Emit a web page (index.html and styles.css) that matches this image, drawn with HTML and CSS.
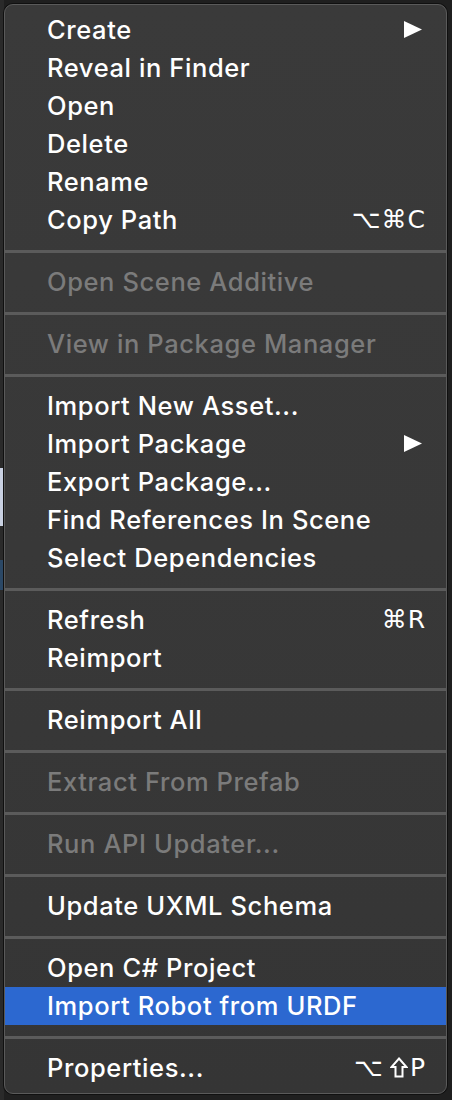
FILE: index.html
```html
<!DOCTYPE html>
<html>
<head>
<meta charset="utf-8">
<link rel="stylesheet" href="styles.css">
</head>
<body>
<div class="menu">
  <div class="item"><span class="label">Create</span><svg class="arrow" width="18" height="17" viewBox="0 0 18 17"><polygon points="0,0 18,8.5 0,17" fill="#ffffff"/></svg></div>
  <div class="item"><span class="label">Reveal in Finder</span></div>
  <div class="item"><span class="label">Open</span></div>
  <div class="item"><span class="label">Delete</span></div>
  <div class="item"><span class="label">Rename</span></div>
  <div class="item"><span class="label">Copy Path</span><span class="key">⌥⌘C</span></div>
  <div class="sep"></div>
  <div class="item disabled"><span class="label">Open Scene Additive</span></div>
  <div class="sep"></div>
  <div class="item disabled"><span class="label">View in Package Manager</span></div>
  <div class="sep"></div>
  <div class="item"><span class="label">Import New Asset...</span></div>
  <div class="item"><span class="label">Import Package</span><svg class="arrow" width="18" height="17" viewBox="0 0 18 17"><polygon points="0,0 18,8.5 0,17" fill="#ffffff"/></svg></div>
  <div class="item"><span class="label">Export Package...</span></div>
  <div class="item"><span class="label">Find References In Scene</span></div>
  <div class="item"><span class="label">Select Dependencies</span></div>
  <div class="sep"></div>
  <div class="item"><span class="label">Refresh</span><span class="key">⌘R</span></div>
  <div class="item"><span class="label">Reimport</span></div>
  <div class="sep"></div>
  <div class="item"><span class="label">Reimport All</span></div>
  <div class="sep"></div>
  <div class="item disabled"><span class="label">Extract From Prefab</span></div>
  <div class="sep"></div>
  <div class="item disabled"><span class="label">Run API Updater...</span></div>
  <div class="sep"></div>
  <div class="item"><span class="label">Update UXML Schema</span></div>
  <div class="sep"></div>
  <div class="item"><span class="label">Open C# Project</span></div>
  <div class="item active"><span class="label">Import Robot from URDF</span></div>
  <div class="sep"></div>
  <div class="item"><span class="label">Properties...</span><span class="key">⌥<svg class="shift" width="18" height="21" viewBox="0 0 18 21"><path d="M9 1.5 L16.5 10 H12.5 V19.5 H5.5 V10 H1.5 Z" fill="none" stroke="#ffffff" stroke-width="2" stroke-linejoin="miter"/></svg>P</span></div>
</div>
</body>
</html>
```
FILE: styles.css
```css
html, body {
  margin: 0;
  padding: 0;
}
body {
  width: 452px;
  height: 1100px;
  background-color: #1f1f1f;
  background-image:
    linear-gradient(#c9d1e2, #c9d1e2),
    linear-gradient(#2b4866, #2b4866),
    linear-gradient(#2a2a2a, #2a2a2a);
  background-size: 4px 58px, 4px 30px, 4px 1100px;
  background-position: 0 468px, 0 560px, 0 0;
  background-repeat: no-repeat;
  padding: 4px 5px 6px 4px;
  box-sizing: border-box;
  font-family: "Inter", "Liberation Sans", sans-serif;
}
.menu {
  width: 443px;
  height: 1090px;
  box-sizing: border-box;
  background: linear-gradient(180deg, #3a3a3a 0%, #383838 50%, #353535 100%);
  border: 1px solid #5a5a5a;
  box-shadow: 0 0 0 1px #101010;
  border-radius: 9px;
  padding: 6px 0 6px 0;
  display: flex;
  flex-direction: column;
}
.item {
  height: 38px;
  box-sizing: border-box;
  display: flex;
  align-items: center;
  justify-content: space-between;
  padding: 0 20px 2px 42px;
  color: #ffffff;
  font-size: 25.5px;
  font-weight: 500;
  letter-spacing: 0.6px;
  white-space: nowrap;
}
.item.disabled {
  color: #7b7b7b;
}
.item.active {
  background: #2c68d0;
}
.arrow {
  margin-right: 4px;
}
.key {
  display: flex;
  align-items: center;
  font-family: "DejaVu Sans", "Inter", sans-serif;
  font-size: 25px;
  font-weight: 400;
  letter-spacing: 1px;
}
.shift {
  margin: 0 2px 0 6px;
}
.sep {
  height: 3px;
  background: #5b5b5b;
  margin: 11px 0 10px 0;
  flex: none;
}
```
